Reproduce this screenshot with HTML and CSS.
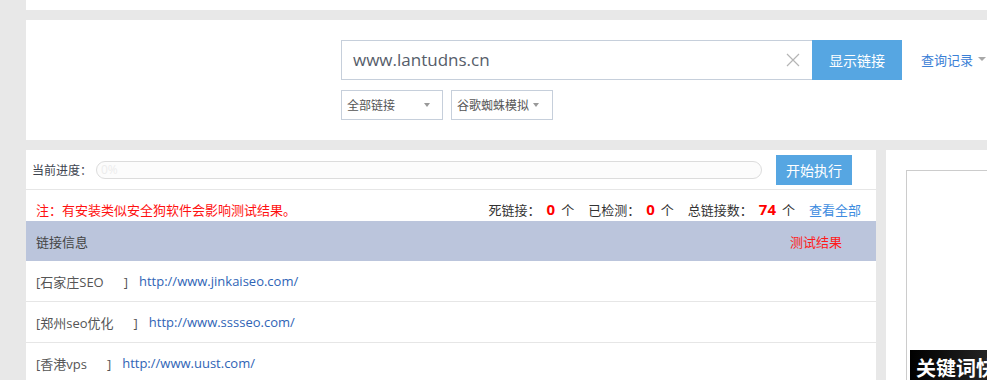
FILE: index.html
```html
<!DOCTYPE html>
<html lang="zh-CN">
<head>
    <meta charset="UTF-8">
    <meta name="viewport" content="width=device-width, initial-scale=1.0">
    <title>死链接检测</title>
    <link rel="stylesheet" href="styles.css">
</head>
<body>
    <div class="page">
        <div class="strip"></div>

        <div class="search-panel">
            <div class="search-row">
                <div class="search-box">
                    <span class="search-text">www.lantudns.cn</span>
                    <svg class="clear-icon" width="14" height="14" viewBox="0 0 14 14">
                        <path d="M1 1L13 13M13 1L1 13" stroke="#b5b5b5" stroke-width="1.2" fill="none"/>
                    </svg>
                </div>
                <button class="btn btn-show">显示链接</button>
                <a class="history" href="#">查询记录<i class="caret"></i></a>
            </div>
            <div class="select-row">
                <div class="select select-type">全部链接<i class="caret"></i></div>
                <div class="select">谷歌蜘蛛模拟<i class="caret"></i></div>
            </div>
        </div>

        <div class="main">
            <div class="check-panel">
                <div class="progress-row">
                    <span class="label">当前进度：</span>
                    <div class="progress"><span class="progress-text">0%</span></div>
                    <button class="btn btn-start">开始执行</button>
                </div>
                <div class="info-row">
                    <span class="notice">注：有安装类似安全狗软件会影响测试结果。</span>
                    <div class="stats">
                        <span class="stat">死链接：<b>0</b>个</span>
                        <span class="stat">已检测：<b>0</b>个</span>
                        <span class="stat">总链接数：<b>74</b>个</span>
                        <a class="view-all" href="#">查看全部</a>
                    </div>
                </div>
                <div class="table-head">
                    <span>链接信息</span>
                    <span class="result-title">测试结果</span>
                </div>
                <ul class="link-list">
                    <li><span class="name">[石家庄SEO<span class="pad"></span>]</span><a href="#">http://www.jinkaiseo.com/</a></li>
                    <li><span class="name">[郑州seo优化<span class="pad"></span>]</span><a href="#">http://www.sssseo.com/</a></li>
                    <li><span class="name">[香港vps<span class="pad"></span>]</span><a href="#">http://www.uust.com/</a></li>
                </ul>
            </div>

            <div class="side-panel">
                <div class="ad-box">
                    <div class="ad-banner">关键词快排</div>
                </div>
            </div>
        </div>
    </div>
</body>
</html>
```

FILE: styles.css
```css
html, body {
    margin: 0;
    overflow: hidden;
}
body {
    font-family: "Open Sans", "Noto Sans CJK SC", sans-serif;
    background: #e8e8e8;
    color: #333;
    font-size: 13px;
}
.page {
    padding-left: 26px;
}
.strip {
    height: 10px;
    background: #fff;
    margin-bottom: 10px;
}
.search-panel {
    height: 120px;
    background: #fff;
    box-sizing: border-box;
    padding: 20px 0 0 315px;
    margin-bottom: 10px;
}
.search-row {
    display: flex;
    align-items: center;
    height: 40px;
}
.search-box {
    width: 471px;
    height: 40px;
    box-sizing: border-box;
    border: 1px solid #c6cfdb;
    border-right: none;
    display: flex;
    align-items: center;
    justify-content: space-between;
    padding: 0 12px 0 11px;
}
.search-text {
    font-size: 17px;
    color: #565d6a;
    line-height: 20px;
}
.btn {
    border: none;
    background: #56a6e2;
    color: #fff;
    font-family: "Noto Sans CJK SC", sans-serif;
    font-size: 14px;
    padding: 0;
    cursor: pointer;
}
.btn-show {
    width: 90px;
    height: 40px;
}
.history {
    margin-left: 19px;
    color: #3b80d6;
    text-decoration: none;
    display: flex;
    align-items: center;
    font-size: 13px;
    margin-top: -2px;
}
.caret {
    display: inline-block;
    width: 0;
    height: 0;
    border-left: 4px solid transparent;
    border-right: 4px solid transparent;
    border-top: 4px solid #a8a8a8;
}
.history .caret {
    margin-left: 5px;
}
.select-row {
    display: flex;
    gap: 8px;
    margin-top: 10px;
}
.select {
    width: 102px;
    height: 30px;
    box-sizing: border-box;
    border: 1px solid #c6cfdb;
    display: flex;
    align-items: center;
    padding-left: 5px;
    font-size: 12px;
    color: #555;
}
.select .caret {
    margin-left: 4px;
    border-top-color: #999;
    border-left-width: 3.5px;
    border-right-width: 3.5px;
}
.select-type .caret {
    margin-left: 29px;
}
.main {
    display: flex;
    align-items: flex-start;
    width: 1300px;
}
.check-panel {
    width: 850px;
    background: #fff;
}
.progress-row {
    height: 39px;
    display: flex;
    align-items: center;
    padding: 0 24px 0 6px;
    border-bottom: 1px solid #e6e6e6;
}
.label {
    font-size: 12px;
    color: #3d4450;
    width: 64px;
}
.progress {
    width: 666px;
    height: 18px;
    box-sizing: border-box;
    border: 1px solid #dcdcdc;
    border-radius: 9px;
    background: #fcfcfc;
    display: flex;
    align-items: center;
    padding-left: 4px;
}
.progress-text {
    font-size: 12px;
    color: #ececec;
}
.btn-start {
    width: 76px;
    height: 30px;
    margin-left: 14px;
}
.info-row {
    height: 31px;
    display: flex;
    align-items: flex-end;
    justify-content: space-between;
    padding: 0 15px 1px 10px;
    box-sizing: border-box;
    line-height: 20px;
}
.notice {
    color: #ff1010;
    font-size: 13px;
}
.stats {
    display: flex;
    align-items: center;
    gap: 14px;
    color: #333;
}
.stat b {
    color: #ff0000;
    font-size: 15px;
    padding: 0 6px 0 6px;
}
.view-all {
    color: #3d8ce0;
    text-decoration: none;
}
.table-head {
    height: 40px;
    background: #bbc5dc;
    display: flex;
    align-items: center;
    justify-content: space-between;
    padding: 0 34px 0 10px;
    color: #444;
}
.result-title {
    color: #ff1a1a;
}
.link-list {
    list-style: none;
    margin: 0;
    padding: 0;
}
.link-list li {
    height: 40px;
    border-bottom: 1px solid #e6e6e6;
    display: flex;
    align-items: center;
    padding-left: 10px;
}
.name {
    color: #555;
    margin-right: 11px;
}
.pad {
    display: inline-block;
    width: 20px;
}
.link-list a {
    color: #2f64b6;
    text-decoration: none;
}
.side-panel {
    width: 300px;
    height: 240px;
    margin-left: 10px;
    background: #fff;
    padding: 20px 0 0 20px;
    box-sizing: border-box;
}
.ad-box {
    height: 220px;
    border: 1px solid #ccc;
    border-right: none;
    border-bottom: none;
    padding: 179px 0 0 3px;
    box-sizing: border-box;
}
.ad-banner {
    height: 40px;
    background: linear-gradient(90deg, #000, #333 40%, #555);
    color: #fff;
    font-family: "Noto Sans CJK SC", sans-serif;
    font-weight: bold;
    font-size: 20px;
    line-height: 36px;
    padding-left: 6px;
}
```
